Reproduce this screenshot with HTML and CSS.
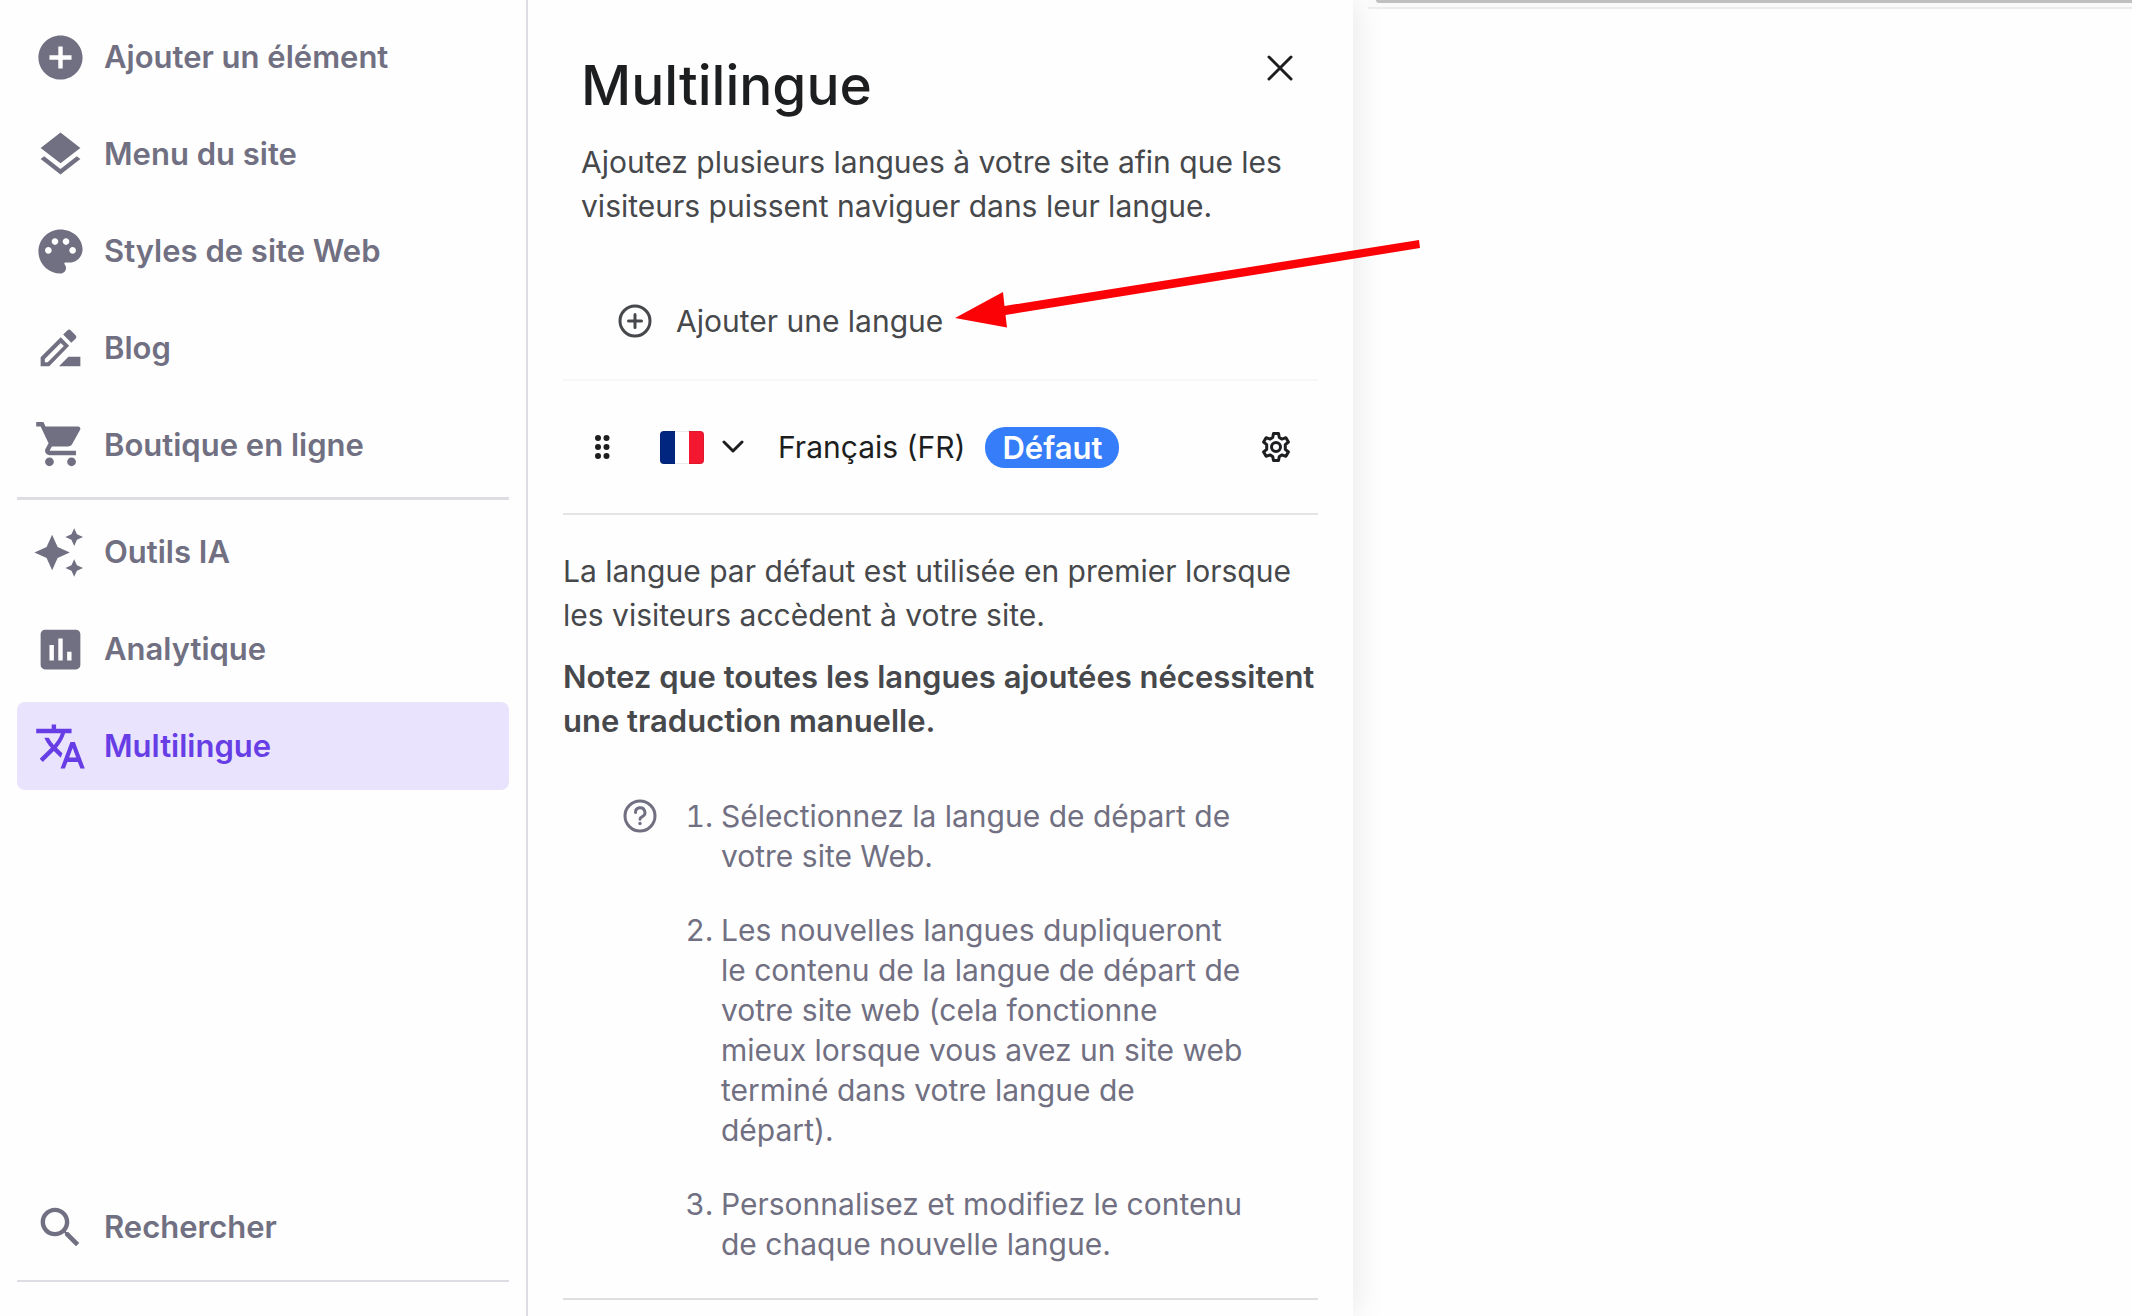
FILE: index.html
```html
<!DOCTYPE html>
<html lang="fr">
<head>
    <meta charset="UTF-8">
    <meta name="viewport" content="width=device-width, initial-scale=1.0">
    <title>Multilingue</title>
    <link rel="stylesheet" href="styles.css">
</head>
<body>

    <div class="app">
        <nav class="sidebar">
            <div class="nav-group">
                <button type="button" class="nav-item">
                    <svg class="nav-icon" viewBox="0 0 24 24"><path d="M12 2C6.48 2 2 6.48 2 12s4.48 10 10 10 10-4.48 10-10S17.52 2 12 2zm5 11h-4v4h-2v-4H7v-2h4V7h2v4h4v2z"/></svg>
                    Ajouter un élément
                </button>
                <button type="button" class="nav-item">
                    <svg class="nav-icon" viewBox="0 0 24 24"><path d="M11.99 18.54l-7.37-5.73L3 14.07l9 7 9-7-1.63-1.27-7.38 5.74zM12 16l7.36-5.73L21 9l-9-7-9 7 1.63 1.27L12 16z"/></svg>
                    Menu du site
                </button>
                <button type="button" class="nav-item">
                    <svg class="nav-icon" viewBox="0 0 24 24"><path d="M12 2C6.49 2 2 6.49 2 12s4.49 10 10 10c1.38 0 2.5-1.12 2.5-2.5 0-.61-.23-1.2-.64-1.67-.08-.1-.13-.21-.13-.33 0-.28.22-.5.5-.5H16c3.31 0 6-2.69 6-6 0-4.96-4.49-9-10-9zM6.5 13c-.83 0-1.5-.67-1.5-1.5S5.67 10 6.5 10 8 10.67 8 11.5 7.33 13 6.5 13zm3-4C8.67 9 8 8.33 8 7.5S8.67 6 9.5 6s1.5.67 1.5 1.5S10.33 9 9.5 9zm5 0c-.83 0-1.5-.67-1.5-1.5S13.67 6 14.5 6s1.5.67 1.5 1.5S15.33 9 14.5 9zm3 4c-.83 0-1.5-.67-1.5-1.5s.67-1.5 1.5-1.5 1.5.67 1.5 1.5-.67 1.5-1.5 1.5z"/></svg>
                    Styles de site Web
                </button>
                <button type="button" class="nav-item">
                    <svg class="nav-icon" viewBox="0 0 24 24"><path fill-rule="evenodd" d="M3 20v-4l9.1-9.1 3.8 3.8L6.9 20zM4.9 18.2h1.3l7.3-7.3-1.4-1.4-7.2 7.3zM13.2 5.7l1.9-1.9c.5-.5 1.1-.5 1.6 0l2.1 2.2c.5.5.5 1.1 0 1.6l-1.9 1.8zM11.3 20l4.3-4.3H21V20z"/></svg>
                    Blog
                </button>
                <button type="button" class="nav-item">
                    <svg class="nav-icon" viewBox="0 0.6 24 24"><path d="M7 18c-1.1 0-1.99.9-1.99 2S5.9 22 7 22s2-.9 2-2-.9-2-2-2zM1 2v2h2l3.6 7.59-1.35 2.45c-.16.28-.25.61-.25.96 0 1.1.9 2 2 2h12v-2H7.42c-.14 0-.25-.11-.25-.25l.03-.12.9-1.63h7.45c.75 0 1.41-.41 1.75-1.03l3.58-6.49c.08-.14.12-.31.12-.48 0-.55-.45-1-1-1H5.21l-.94-2H1zm16 16c-1.1 0-1.99.9-1.99 2s.89 2 1.99 2 2-.9 2-2-.9-2-2-2z"/></svg>
                    Boutique en ligne
                </button>
            </div>

            <div class="nav-group nav-group-tools">
                <button type="button" class="nav-item">
                    <svg class="nav-icon" viewBox="0.8 0 24 24"><path d="M19 9l1.25-2.75L23 5l-2.75-1.25L19 1l-1.25 2.75L15 5l2.75 1.25L19 9zM11.5 9.5L9 4 6.5 9.5 1 12l5.5 2.5L9 20l2.5-5.5L17 12l-5.5-2.5zM19 15l-1.25 2.75L15 19l2.75 1.25L19 23l1.25-2.75L23 19l-2.75-1.25L19 15z"/></svg>
                    Outils IA
                </button>
                <button type="button" class="nav-item">
                    <svg class="nav-icon" viewBox="0 0 24 24"><path d="M19 3H5c-1.1 0-2 .9-2 2v14c0 1.1.9 2 2 2h14c1.1 0 2-.9 2-2V5c0-1.1-.9-2-2-2zM9 17H7v-7h2v7zm4 0h-2V7h2v10zm4 0h-2v-4h2v4z"/></svg>
                    Analytique
                </button>
                <button type="button" class="nav-item active" aria-current="page">
                    <svg class="nav-icon" viewBox="0 0 24 24"><path d="M12.87 15.07l-2.54-2.51.03-.03c1.74-1.94 2.98-4.17 3.71-6.53H17V4h-7V2H8v2H1v1.99h11.17C11.5 7.92 10.44 9.75 9 11.35 8.07 10.32 7.3 9.19 6.69 8h-2c.73 1.63 1.73 3.17 2.98 4.56l-5.09 5.02L4 19l5-5 3.11 3.11.76-2.04zM18.5 10h-2L12 22h2l1.12-3h4.75L21 22h2l-4.5-12zm-2.62 7l1.62-4.33L19.12 17h-3.24z"/></svg>
                    Multilingue
                </button>
            </div>

            <div class="nav-group nav-group-search">
                <button type="button" class="nav-item">
                    <svg class="nav-icon" viewBox="0 0 24 24"><path d="M15.5 14h-.79l-.28-.27C15.41 12.59 16 11.11 16 9.5 16 5.91 13.09 3 9.5 3S3 5.91 3 9.5 5.91 16 9.5 16c1.61 0 3.09-.59 4.23-1.57l.27.28v.79l5 4.99L20.49 19l-4.99-5zm-6 0C7.01 14 5 11.99 5 9.5S7.01 5 9.5 5 14 7.01 14 9.5 11.99 14 9.5 14z"/></svg>
                    Rechercher
                </button>
            </div>
        </nav>

        <main class="panel">
            <header class="panel-header">
                <h1>Multilingue</h1>
                <button type="button" class="close-btn" aria-label="Fermer">
                    <svg width="26" height="26" viewBox="0 0 26 26"><path d="M2 2l22 22M24 2L2 24"/></svg>
                </button>
            </header>
            <p class="intro">Ajoutez plusieurs langues à votre site afin que les visiteurs puissent naviguer dans leur langue.</p>

            <button type="button" class="add-language">
                <svg class="line-icon" viewBox="0 0 40 40"><circle cx="20" cy="20" r="15"/><path d="M20 13.5v13M13.5 20h13"/></svg>
                Ajouter une langue
            </button>

            <div class="language-row">
                <svg class="grip" width="16" height="26" viewBox="0 0 16 26"><circle cx="4" cy="4" r="3"/><circle cx="12.5" cy="4" r="3"/><circle cx="4" cy="13" r="3"/><circle cx="12.5" cy="13" r="3"/><circle cx="4" cy="22" r="3"/><circle cx="12.5" cy="22" r="3"/></svg>
                <button type="button" class="flag-btn" aria-label="Changer le drapeau">
                    <span class="flag"></span>
                    <svg class="chevron" width="22" height="14" viewBox="0 0 22 14"><path d="M2 2l9 9 9-9"/></svg>
                </button>
                <span class="language-name">Français (FR)</span>
                <span class="badge">Défaut</span>
                <button type="button" class="settings-btn" aria-label="Paramètres">
                    <svg width="32" height="32" viewBox="0 0 32 32">
                        <path d="M13.5 2.5h5l.8 4 2.7 1.6 3.9-1.4 2.5 4.3-3.1 2.7v4.6l3.1 2.7-2.5 4.3-3.9-1.4-2.7 1.600-.8 4h-5l-.8-4-2.7-1.600-3.900 1.400L3.600 21l3.100-2.700v-4.600L3.600 11l2.500-4.300L10 8.100l2.700-1.600z"/>
                        <circle cx="16" cy="16" r="4.5"/>
                    </svg>
                </button>
            </div>

            <div class="notes">
                <p>La langue par défaut est utilisée en premier lorsque les visiteurs accèdent à votre site.</p>
                <p class="strong">Notez que toutes les langues ajoutées nécessitent une traduction manuelle.</p>
            </div>

            <div class="help">
                <svg class="line-icon" viewBox="0 0 40 40"><circle cx="20" cy="20" r="15"/><path d="M15.5 16.5a4.700 4.700 0 1 1 6.800 4.100c-1.500.8-2.300 1.400-2.300 2.600"/><circle class="dot" cx="20" cy="27.5" r="1.7"/></svg>
                <ol>
                    <li>Sélectionnez la langue de départ de votre site Web.</li>
                    <li>Les nouvelles langues dupliqueront le contenu de la langue de départ de votre site web (cela fonctionne mieux lorsque vous avez un site web terminé dans votre langue de départ).</li>
                    <li>Personnalisez et modifiez le contenu de chaque nouvelle langue.</li>
                </ol>
            </div>

            <!-- Arrow pointing at the add button -->
            <svg class="arrow" width="470" height="96" viewBox="0 0 470 96">
                <path d="M2 82l48-26 1.500 14L466 4l1 8L52.500 79l1.500 12.500z"/>
            </svg>
        </main>

        <section class="canvas">
            <div class="canvas-top"><div class="canvas-bar"></div></div>
        </section>
    </div>

</body>
</html>
```
FILE: styles.css
```css
/* --- Theme --- */
:root {
    --gray: #717082;
    --dark: #1d1e20;
    --text: #46484b;
    --line: #dddde4;
    --purple: #673de6;
    --purple-light: #e9e3fd;
}

* {
    box-sizing: border-box;
}

body {
    margin: 0;
    font-family: Inter, "Open Sans", sans-serif;
    font-size: 30px;
    line-height: 44px;
    color: var(--text);
    background-color: #fefefe;
}

h1, p, ol {
    margin: 0;
}

button {
    border: none;
    background: none;
    padding: 0;
    font: inherit;
    color: inherit;
    cursor: pointer;
}

.app {
    display: flex;
    min-height: 100vh;
    overflow: hidden;
}

/* --- Sidebar --- */
.sidebar {
    position: relative;
    z-index: 2;
    display: flex;
    flex-direction: column;
    flex: 0 0 528px;
    padding: 13px 17px 34px;
    border-right: 2px solid var(--line);
    background-color: #fefefe;
}

.nav-group {
    display: flex;
    flex-direction: column;
    gap: 9px;
}

.nav-group-tools {
    margin-top: 8px;
    padding-top: 8px;
    border-top: 3px solid var(--line);
}

.nav-group-search {
    margin-top: auto;
    padding-bottom: 9px;
    border-bottom: 2px solid var(--line);
}

.nav-item {
    display: flex;
    align-items: center;
    gap: 17px;
    height: 88px;
    padding: 0 17px;
    border-radius: 8px;
    font-size: 31px;
    font-weight: 600;
    color: var(--gray);
    text-align: left;
}

.nav-item.active {
    background-color: var(--purple-light);
    color: var(--purple);
}

.nav-icon {
    width: 53px;
    height: 53px;
    fill: currentColor;
}

/* --- Panel --- */
.panel {
    position: relative;
    z-index: 1;
    flex: 0 0 825px;
    padding: 48px 35px 0;
    box-shadow: 0 0 32px rgba(0, 0, 0, 0.1);
}

.panel-header {
    display: flex;
    justify-content: space-between;
    align-items: flex-start;
    padding: 0 18px;
}

h1 {
    font-size: 55px;
    font-weight: 500;
    line-height: 74px;
    color: var(--dark);
}

.close-btn {
    display: flex;
    align-items: center;
    justify-content: center;
    width: 40px;
    height: 40px;
}

.close-btn svg,
.chevron {
    fill: none;
    stroke: var(--dark);
    stroke-width: 3;
    stroke-linecap: round;
    stroke-linejoin: round;
}

.intro {
    margin: 18px 0 34px;
    padding: 0 18px;
}

.line-icon {
    flex: none;
    width: 40px;
    height: 40px;
    fill: none;
    stroke: currentColor;
    stroke-width: 3;
    stroke-linecap: round;
}

.line-icon .dot {
    fill: currentColor;
    stroke: none;
}

.add-language {
    display: flex;
    align-items: center;
    gap: 21px;
    width: 100%;
    height: 119px;
    padding: 0 52px;
    border-bottom: 2px solid #f7f7f8;
}

.language-row {
    display: flex;
    align-items: center;
    height: 134px;
    padding: 0 26px 0 31px;
    border-bottom: 2px solid #e3e4e5;
    color: var(--dark);
}

.grip {
    fill: var(--dark);
}

.flag-btn {
    display: flex;
    align-items: center;
    gap: 18px;
    margin: 0 34px 0 50px;
}

.flag {
    width: 44px;
    height: 33px;
    border-radius: 4px;
    background: linear-gradient(to right, #00267f 33%, #ffffff 33% 67%, #f31830 67%);
    box-shadow: inset 0 0 0 1px rgba(0, 0, 0, 0.08);
}

.badge {
    margin-left: 20px;
    padding: 0 17px;
    border-radius: 20px;
    font-size: 31px;
    font-weight: 600;
    line-height: 41px;
    color: #ffffff;
    background-color: #357df9;
}

.settings-btn {
    display: flex;
    margin-left: auto;
}

.settings-btn svg {
    fill: none;
    stroke: var(--dark);
    stroke-width: 3;
    stroke-linejoin: round;
}

.notes {
    display: flex;
    flex-direction: column;
    gap: 18px;
    padding-top: 34px;
}

.strong {
    font-size: 31px;
    font-weight: 600;
}

/* --- Help steps --- */
.help {
    display: flex;
    align-items: flex-start;
    margin-top: 53px;
    padding: 0 71px 34px 57px;
    border-bottom: 2px solid #dfdfe0;
    line-height: 40px;
    color: var(--gray);
}

.help ol {
    display: flex;
    flex-direction: column;
    gap: 34px;
    padding-left: 61px;
}

.arrow {
    position: absolute;
    top: 236px;
    left: 425px;
    fill: #fb0207;
    pointer-events: none;
}

/* --- Site canvas --- */
.canvas {
    flex: 1;
    min-width: 0;
    padding-left: 15px;
}

.canvas-top {
    position: relative;
    z-index: 2;
    height: 9px;
    padding-left: 8px;
    border-bottom: 2px solid #ececec;
    background-color: #fafafa;
}

.canvas-bar {
    height: 3px;
    border-bottom-left-radius: 4px;
    background-color: #c0c0c0;
}
```
